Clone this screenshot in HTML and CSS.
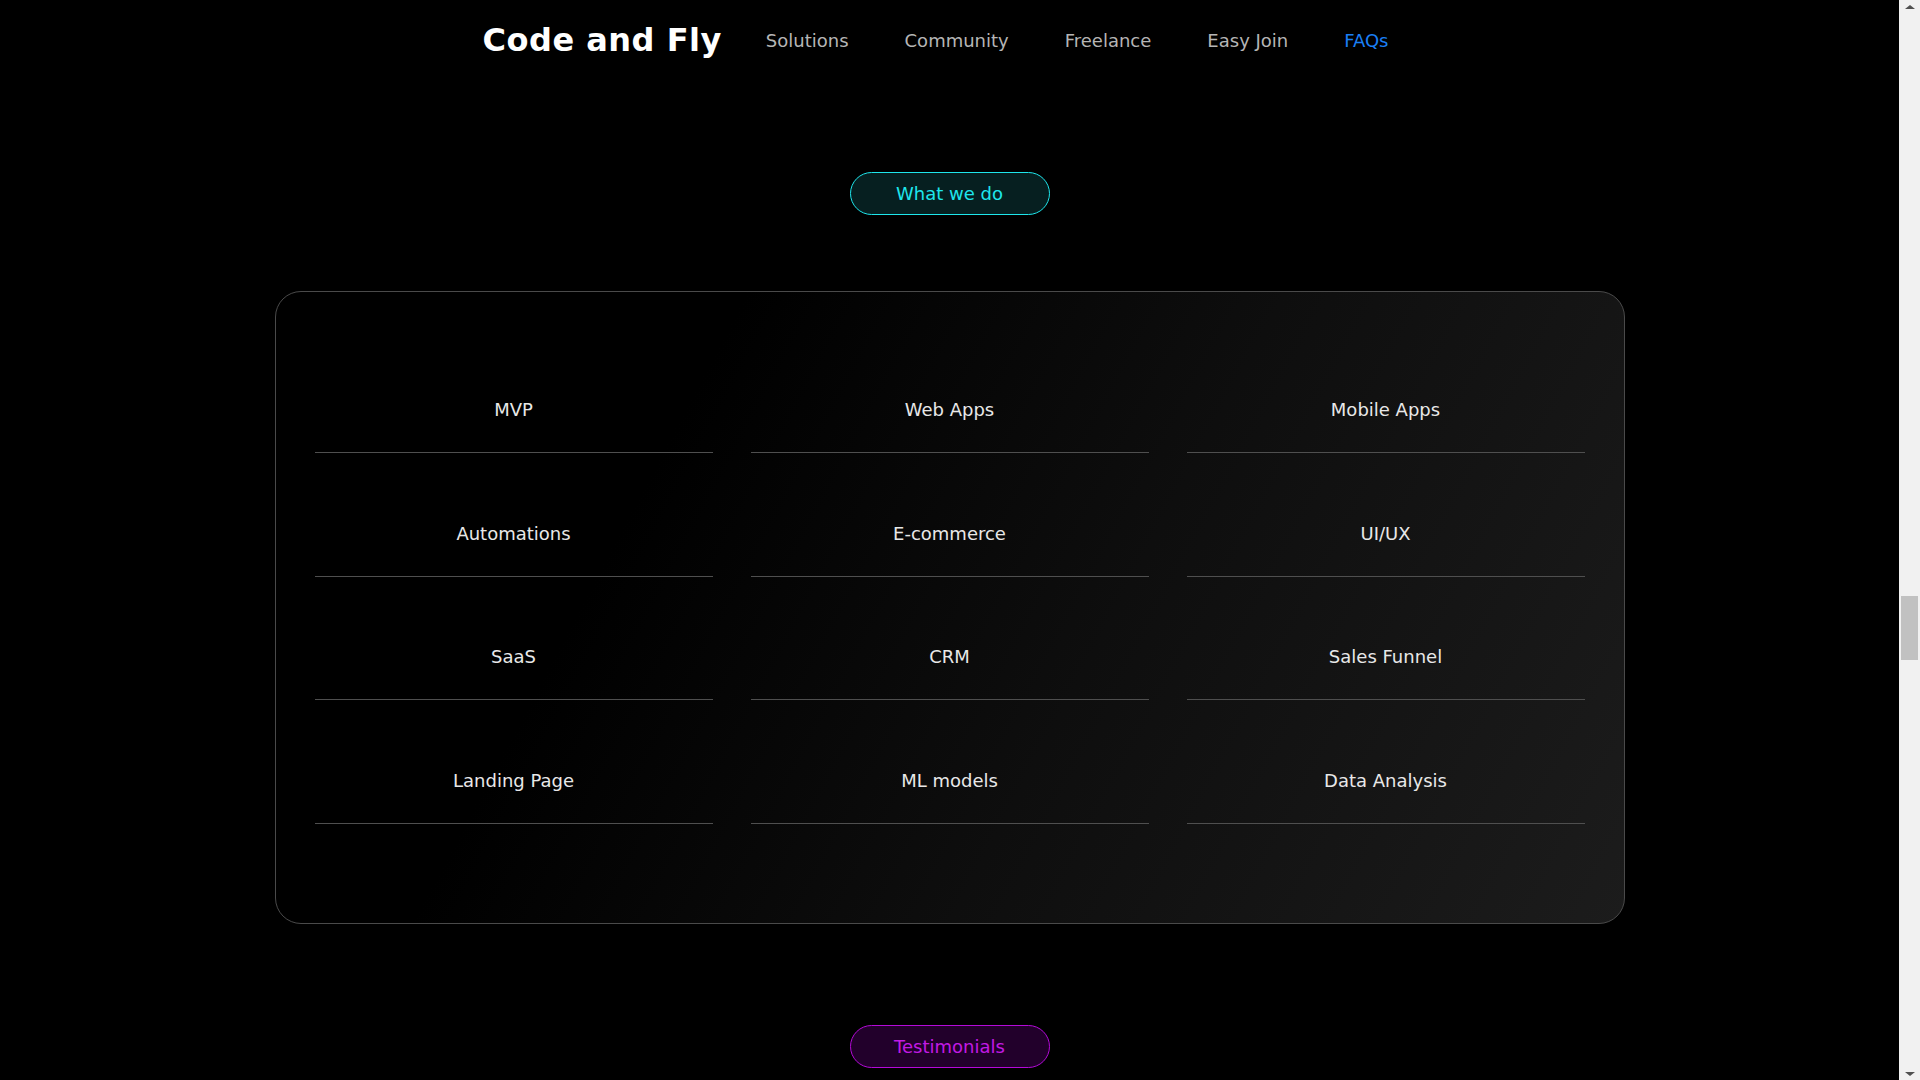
FILE: index.html
```html
<!DOCTYPE html>
<html lang="en">
<head>
<meta charset="utf-8">
<title>Code and Fly</title>
<link rel="stylesheet" href="styles.css">
</head>
<body>
<div class="page">
  <header class="header">
    <div class="logo">Code and Fly</div>
    <nav class="nav">
      <a class="nav-link" href="#">Solutions</a>
      <a class="nav-link" href="#">Community</a>
      <a class="nav-link" href="#">Freelance</a>
      <a class="nav-link" href="#">Easy Join</a>
      <a class="nav-link nav-link-active" href="#">FAQs</a>
    </nav>
  </header>

  <section class="services">
    <div class="pill pill-cyan">What we do</div>
    <div class="card">
      <div class="grid">
        <div class="cell">MVP</div>
        <div class="cell">Web Apps</div>
        <div class="cell">Mobile Apps</div>
        <div class="cell">Automations</div>
        <div class="cell">E-commerce</div>
        <div class="cell">UI/UX</div>
        <div class="cell">SaaS</div>
        <div class="cell">CRM</div>
        <div class="cell">Sales Funnel</div>
        <div class="cell">Landing Page</div>
        <div class="cell">ML models</div>
        <div class="cell">Data Analysis</div>
      </div>
    </div>
  </section>

  <section class="testimonials">
    <div class="pill pill-magenta">Testimonials</div>
  </section>
</div>

<div class="scrollbar" aria-hidden="true">
  <div class="sb-arrow sb-up"></div>
  <div class="sb-track">
    <div class="sb-thumb"></div>
  </div>
  <div class="sb-arrow sb-down"></div>
</div>
</body>
</html>
```

FILE: styles.css
```css
html {
  background: #000;
}

body {
  margin: 0;
  background: #000;
  font-family: "DejaVu Sans", "Liberation Sans", sans-serif;
  color: #fff;
  overflow: hidden;
}

.page {
  margin-right: 21px;
}

.header {
  height: 80px;
  display: flex;
  align-items: center;
  justify-content: center;
  padding-right: 28px;
}

.logo {
  font-size: 32px;
  font-weight: 700;
  letter-spacing: 0.5px;
  color: #fff;
  margin-right: 44px;
  line-height: 1;
}

.nav {
  display: flex;
  align-items: center;
  gap: 56px;
}

.nav-link {
  font-size: 18px;
  color: #b5b5b5;
  text-decoration: none;
  line-height: 1;
  padding-top: 2px;
}

.nav-link-active {
  color: #1a7ff5;
}

.services {
  display: flex;
  flex-direction: column;
  align-items: center;
  padding-top: 92px;
}

.pill {
  width: 200px;
  height: 43px;
  box-sizing: border-box;
  border-radius: 22px;
  display: flex;
  align-items: center;
  justify-content: center;
  font-size: 18px;
}

.pill-cyan {
  border: 1px solid #1ee6ec;
  background: #061f20;
  color: #1ee6ec;
}

.pill-magenta {
  border: 1px solid #b40ad8;
  background: #22002b;
  color: #c21ae4;
}

.card {
  margin-top: 76px;
  width: 1350px;
  box-sizing: border-box;
  border: 1px solid #4a4a4a;
  border-radius: 26px;
  background: linear-gradient(118deg, #000 28%, #0e0e0e 60%, #1c1c1c 100%);
  padding: 61px 39px 99px;
}

.grid {
  display: grid;
  grid-template-columns: repeat(3, 1fr);
  column-gap: 38px;
  row-gap: 23.7px;
}

.cell {
  padding: 46px 0 31px;
  line-height: 22px;
  font-size: 18px;
  color: #e8e8e8;
  text-align: center;
  border-bottom: 1px solid #4f4f4f;
}

.testimonials {
  display: flex;
  justify-content: center;
  padding-top: 101px;
  padding-bottom: 600px;
}

.scrollbar {
  position: fixed;
  top: 0;
  right: 0;
  width: 21px;
  height: 100vh;
  background: #f1f1f1;
  display: flex;
  flex-direction: column;
}

.sb-arrow {
  height: 21px;
  width: 21px;
  display: flex;
  align-items: center;
  justify-content: center;
}

.sb-up::before,
.sb-down::before {
  content: "";
  width: 0;
  height: 0;
  border-left: 5px solid transparent;
  border-right: 5px solid transparent;
}

.sb-up::before {
  border-bottom: 4px solid #505050;
  margin-top: -8px;
}

.sb-down::before {
  border-top: 4px solid #505050;
  margin-top: 8px;
}

.sb-track {
  flex: 1;
  width: 100%;
  padding-top: 575px;
  box-sizing: border-box;
}

.sb-thumb {
  margin-left: 2px;
  width: 17px;
  height: 64px;
  background: #c1c1c1;
}
```
